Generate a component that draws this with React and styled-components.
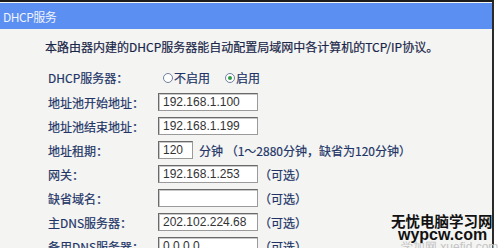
import styled, { createGlobalStyle } from 'styled-components';

const GlobalStyle = createGlobalStyle`
  html, body {
    margin: 0;
    padding: 0;
    background: #ffffff;
  }
  body {
    font-family: "Noto Sans CJK SC", "Liberation Sans", sans-serif;
  }
`;

const rows = [
  { label: '地址池开始地址：', value: '192.168.1.100' },
  { label: '地址池结束地址：', value: '192.168.1.199' },
  { label: '地址租期：', value: '120', short: true, note: '分钟 （1～2880分钟，缺省为120分钟）' },
  { label: '网关：', value: '192.168.1.253', note: '（可选）', paren: true },
  { label: '缺省域名：', value: '', note: '（可选）', paren: true },
  { label: '主DNS服务器：', value: '202.102.224.68', note: '（可选）', paren: true },
  { label: '备用DNS服务器：', value: '0.0.0.0', note: '（可选）', paren: true },
];

const App = () => {
  return (
    <>
      <GlobalStyle />
      <Page>
        <Frame>
          <TitleBar>DHCP服务</TitleBar>
          <Intro>本路由器内建的DHCP服务器能自动配置局域网中各计算机的TCP/IP协议。</Intro>
          <Form>
            <Row $first>
              <Label>DHCP服务器：</Label>
              <Controls>
                <RadioItem>
                  <Radio />
                  不启用
                </RadioItem>
                <RadioItem>
                  <Radio $checked />
                  启用
                </RadioItem>
              </Controls>
            </Row>
            {rows.map((row) => (
              <Row key={row.label}>
                <Label>{row.label}</Label>
                <Controls>
                  <Field $short={row.short}>{row.value}</Field>
                  {row.note && <Note $paren={row.paren}>{row.note}</Note>}
                </Controls>
              </Row>
            ))}
          </Form>
        </Frame>
        <Watermark>
          <Brand>无忧电脑学习网</Brand>
          <Domain>wypcw.com</Domain>
          <Faint>学加网 xuefid.com</Faint>
        </Watermark>
      </Page>
    </>
  );
};

const Page = styled.div`
  position: relative;
  width: 504px;
  height: 248px;
  overflow: hidden;
  background: #ffffff;
`;

const Frame = styled.div`
  width: 492px;
  height: 246px;
  border-top: 2px solid #1c1c1c;
  border-right: 2px solid #2a2a2a;
  background: #f4f4f3;
  overflow: hidden;
`;

const TitleBar = styled.div`
  height: 26px;
  display: flex;
  align-items: center;
  padding-left: 3px;
  margin-top: 1px;
  background: #5c8ff2;
  color: #eef3ff;
  font-size: 12px;
  letter-spacing: -0.5px;
`;

const Intro = styled.div`
  margin-top: 9px;
  padding-left: 45px;
  height: 18px;
  line-height: 18px;
  font-size: 12px;
  color: #1a2648;
  -webkit-text-stroke: 0.2px #1a2648;
  white-space: nowrap;
`;

const Form = styled.div`
  margin-top: 9px;
  padding-left: 48px;
  display: flex;
  flex-direction: column;
`;

const Row = styled.div`
  display: flex;
  align-items: center;
  height: ${(p) => (p.$first ? '25px' : '24px')};
`;

const Label = styled.div`
  width: 110px;
  font-size: 12px;
  color: #223466;
  -webkit-text-stroke: 0.2px #223466;
  white-space: nowrap;
`;

const Controls = styled.div`
  display: flex;
  align-items: center;
  gap: 6px;
  font-size: 12px;
  color: #223466;
  -webkit-text-stroke: 0.2px #223466;
  white-space: nowrap;
`;

const RadioItem = styled.label`
  display: flex;
  align-items: center;
  gap: 1px;
  margin-left: 5px;
  margin-right: 4px;
`;

const Radio = styled.span`
  position: relative;
  width: 8px;
  height: 8px;
  border: 1px solid #6f7f9e;
  border-radius: 50%;
  background: #ffffff;
  -webkit-text-stroke: 0;

  &::after {
    content: '';
    display: ${(p) => (p.$checked ? 'block' : 'none')};
    position: absolute;
    left: 2px;
    top: 2px;
    width: 4px;
    height: 4px;
    border-radius: 50%;
    background: #2f9b45;
  }
`;

const Field = styled.div`
  box-sizing: border-box;
  width: ${(p) => (p.$short ? '35px' : '100px')};
  height: 18px;
  padding-left: 4px;
  display: flex;
  align-items: center;
  background: #ffffff;
  border: 1px solid #6a6a6a;
  border-right-color: #9a9a9a;
  border-bottom-color: #9a9a9a;
  box-shadow: inset 1px 1px 0 #c8c8c8;
  font-family: "Liberation Sans", sans-serif;
  font-size: 12px;
  color: #333333;
  -webkit-text-stroke: 0;
  word-spacing: -1px;
`;

const Note = styled.span`
  margin-left: ${(p) => (p.$paren ? '-5px' : '0')};
`;

const Watermark = styled.div`
  position: absolute;
  left: 389px;
  top: 212px;
  width: 115px;
  display: flex;
  flex-direction: column;
  align-items: flex-start;
`;

const Brand = styled.div`
  font-size: 14.5px;
  font-weight: 700;
  line-height: 17px;
  color: #111111;
  padding-left: 2px;
`;

const Domain = styled.div`
  margin-top: -2px;
  padding-left: 9px;
  font-family: "Liberation Sans", sans-serif;
  font-size: 16px;
  font-weight: 700;
  line-height: 15px;
  color: #111111;
`;

const Faint = styled.div`
  margin-top: -3px;
  padding-left: 12px;
  font-family: "Liberation Sans", sans-serif;
  font-size: 12px;
  color: #c4c4c4;
  white-space: nowrap;
`;

export default App;
